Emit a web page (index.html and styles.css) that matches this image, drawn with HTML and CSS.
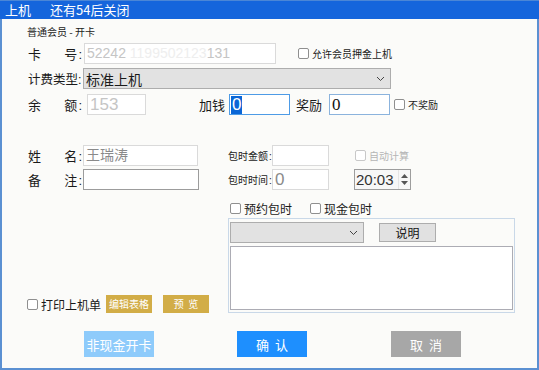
FILE: index.html
```html
<!DOCTYPE html>
<html>
<head>
<meta charset="utf-8">
<link rel="stylesheet" href="styles.css">
</head>
<body>
<div class="window">
  <div class="titlebar"><span class="t1">上机</span><span class="t2">还有54后关闭</span></div>
  <div class="form">
    <div class="subtitle">普通会员 - 开卡</div>

    <div class="row r-card">
      <div class="lbl"><span>卡</span><span>号<i class="colon">:</i></span></div>
      <div class="inp inp-light w-card"><span class="dim">52242</span><span class="ghost"> 1199502123</span><span class="dim">131</span></div>
      <label class="chk small ml-deposit"><span class="box"></span>允许会员押金上机</label>
    </div>

    <div class="row r-fee">
      <div class="lbl lbl-fee">计费类型<i class="colon">:</i></div>
      <div class="select w-fee"><span>标准上机</span><svg class="chev" width="9" height="6" viewBox="0 0 9 6"><path d="M1 1l3.5 3.5L8 1" fill="none" stroke="#444" stroke-width="1"/></svg></div>
    </div>

    <div class="row r-bal">
      <div class="lbl"><span>余</span><span>额<i class="colon">:</i></span></div>
      <div class="inp inp-light w-bal big dim">153</div>
      <span class="txt ml-add">加钱</span>
      <div class="inp inp-focus w-add big"><span class="sel">0</span></div>
      <span class="txt ml-bonus">奖励</span>
      <div class="inp inp-blue w-bonus big serif">0</div>
      <label class="chk small ml-nob"><span class="box"></span>不奖励</label>
    </div>

    <div class="lower">
      <div class="left">
        <div class="row">
          <div class="lbl"><span>姓</span><span>名<i class="colon">:</i></span></div>
          <div class="inp inp-light w-name grey">王瑞涛</div>
        </div>
        <div class="row mt4">
          <div class="lbl"><span>备</span><span>注<i class="colon">:</i></span></div>
          <div class="inp inp-dark w-remark"></div>
        </div>
        <div class="print-row">
          <label class="chk"><span class="box"></span>打印上机单</label>
          <button class="gold ml-edit">编辑表格</button>
          <button class="gold ml-prev">预&nbsp;&nbsp;览</button>
        </div>
      </div>
      <div class="right">
        <div class="row">
          <span class="small lbl-s">包时金额<i class="colon">:</i></span>
          <div class="inp inp-light w-amt"></div>
          <label class="chk small disabled ml-auto-calc"><span class="box"></span>自动计算</label>
        </div>
        <div class="row mt4">
          <span class="small lbl-s">包时时间<i class="colon">:</i></span>
          <div class="inp inp-light w-amt grey big">0</div>
          <div class="spin">
            <span class="spin-val">20:03</span>
            <span class="spin-btns">
              <svg width="7" height="4" viewBox="0 0 7 4"><path d="M3.5 0L7 4H0z" fill="#555"/></svg>
              <svg width="7" height="4" viewBox="0 0 7 4"><path d="M0 0h7L3.5 4z" fill="#555"/></svg>
            </span>
          </div>
        </div>
        <div class="row checks">
          <label class="chk"><span class="box"></span>预约包时</label>
          <label class="chk ml-cash"><span class="box"></span>现金包时</label>
        </div>
        <div class="group">
          <div class="group-top">
            <div class="select w-gsel"><span></span><svg class="chev" width="9" height="6" viewBox="0 0 9 6"><path d="M1 1l3.5 3.5L8 1" fill="none" stroke="#444" stroke-width="1"/></svg></div>
            <button class="btn-gray">说明</button>
          </div>
          <div class="textarea"></div>
        </div>
      </div>
    </div>

    <div class="actions">
      <button class="act act-light">非现金开卡</button>
      <button class="act act-blue">确&nbsp;&nbsp;认</button>
      <button class="act act-gray">取&nbsp;&nbsp;消</button>
    </div>
  </div>
</div>
</body>
</html>
```
FILE: styles.css
```css
* { box-sizing: border-box; }
html, body { margin: 0; padding: 0; }
body {
  width: 539px; height: 370px; overflow: hidden;
  font-family: "Noto Sans CJK SC", "Liberation Sans", sans-serif;
  color: #1a1a1a;
}
.window {
  width: 539px; height: 370px;
  background: #fbfbf9;
  border: 1px solid #5b90d2;
  border-left-width: 2px;
  border-top: none;
  border-right-width: 2px;
  border-bottom-width: 2px;
}
.titlebar {
  height: 19px;
  margin: 0 -2px 0 -2px;
  background: #1565dc;
  border-top: 1px solid #4b86d6;
  color: #fff;
  font-size: 13px;
  line-height: 17px;
  display: flex;
  padding-left: 5px;
}
.t2 { margin-left: 19px; }
.form { padding-left: 25px; }
.subtitle { font-size: 10px; line-height: 12px; margin-top: 7px; height: 12px; }
.row { display: flex; align-items: center; height: 21px; }
.r-card { margin-top: 5px; }
.r-fee { margin-top: 4px; }
.r-bal { margin-top: 5px; }
.mt4 { margin-top: 3px; }
.colon {
  font-style: normal; font-family: "Liberation Sans", sans-serif;
  margin-left: 1px;
}
.lbl {
  width: 56px; display: flex; justify-content: space-between;
  font-size: 13px; padding-left: 1px; padding-right: 1px; flex: none; white-space: nowrap;
}
.lbl-fee { display: block; width: 56px; font-size: 12.5px; padding-right: 0; }
.lbl-fee .colon { margin-left: 0; }
.lbl-s { width: 44px; white-space: nowrap; }
.txt { font-size: 13px; }
.small { font-size: 10px; }
.inp {
  height: 21px; background: #fff; border: 1px solid #d8d8d8;
  font-family: "Liberation Sans", "Noto Sans CJK SC", sans-serif;
  font-size: 14px; line-height: 19px; padding-left: 2px; white-space: nowrap; overflow: hidden;
  flex: none;
}
.inp-light { border-color: #dadada; }
.inp-focus { border-color: #4d9be6; }
.inp-blue { border-color: #8bb3dd; }
.inp-dark { border-color: #9c9c9c; }
.big { font-size: 17px; }
.dim { color: #c5c5c5; }
.ghost { color: #eeeeee; }
.grey { color: #8a8a8a; }
.serif { font-family: "Liberation Serif", serif; color: #111; }
.sel { background: #0a66d6; color: #fff; display: inline-block; line-height: 18px; padding: 0 1px; }
.w-card { width: 192px; margin-left: 1px; }
.w-fee { width: 308px; }
.w-bal { width: 59px; margin-left: 4px; }
.ml-add { margin-left: 53px; }
.w-add { width: 61px; margin-left: 4px; padding-left: 1px; }
.ml-bonus { margin-left: 6px; }
.w-bonus { width: 61px; margin-left: 7px; }
.ml-nob { margin-left: 4px; }
.ml-deposit { margin-left: 22px; }
.chk { display: flex; align-items: center; font-size: 12px; white-space: nowrap; }
.chk.small { font-size: 10px; }
.box {
  width: 11px; height: 11px; border: 1px solid #8f8f8f; border-radius: 2px;
  background: #fff; margin-right: 3px; flex: none;
}
.disabled { color: #b5b5b5; }
.disabled .box { border-color: #c8c8c8; }
.select {
  height: 21px; background: #e2e2e2; border: 1px solid #adadad;
  display: flex; align-items: center; justify-content: space-between;
  font-size: 14px; padding: 0 5px 0 2px; flex: none;
}
.lower { display: grid; grid-template-columns: 201px 286px; margin-top: 30px; }
.left { display: flex; flex-direction: column; }
.w-name { width: 115px; }
.w-remark { width: 116px; }
.print-row { margin-top: auto; margin-bottom: 0; display: flex; align-items: center; height: 18px; }
.gold {
  height: 18px; width: 46px; background: #d2ad47; border: none; color: #fff;
  font-family: inherit; font-size: 10px; padding: 0; line-height: 18px;
}
.ml-edit { margin-left: 5px; }
.ml-prev { margin-left: 11px; }
.right { display: flex; flex-direction: column; }
.w-amt { width: 57px; }
.ml-auto-calc { margin-left: 26px; }
.spin {
  width: 57px; height: 21px; margin-left: 25px; border: 1px solid #9d9d9d; background: #f7f7f7;
  display: flex; align-items: center; justify-content: space-between;
  font-family: "Liberation Sans", sans-serif; font-size: 15px; color: #333; padding-left: 1px;
}
.spin-btns {
  width: 12px; height: 19px; display: flex; flex-direction: column; align-items: center;
  justify-content: space-around; border-left: 1px solid #e4e4e4; padding: 2px 0;
}
.checks { margin-top: 12px; height: 12px; padding-left: 2px; }
.ml-cash { margin-left: 18px; }
.group {
  margin-top: 4px; height: 95px; width: 287px; border: 1px solid #c9d8e8;
  padding: 3px 1px 0 1px;
}
.group-top { display: flex; align-items: center; }
.w-gsel { width: 134px; }
.btn-gray {
  margin-left: 15px; width: 57px; height: 19px; background: #e1e1e1; border: 1px solid #adadad;
  font-family: inherit; font-size: 12px; padding: 0; color: #111;
}
.textarea { margin-top: 3px; width: 283px; height: 64px; background: #fff; border: 1px solid #acacb4; }
.actions { display: flex; margin-top: 18px; padding-left: 57px; }
.act {
  width: 70px; height: 26px; border: none; color: #fff; font-family: inherit;
  font-size: 13px; padding: 0;
}
.act-light { background: #8ecbfb; }
.act-blue { background: #1e8ffe; margin-left: 83px; }
.act-gray { background: #a7a7a7; margin-left: 84px; }
```
